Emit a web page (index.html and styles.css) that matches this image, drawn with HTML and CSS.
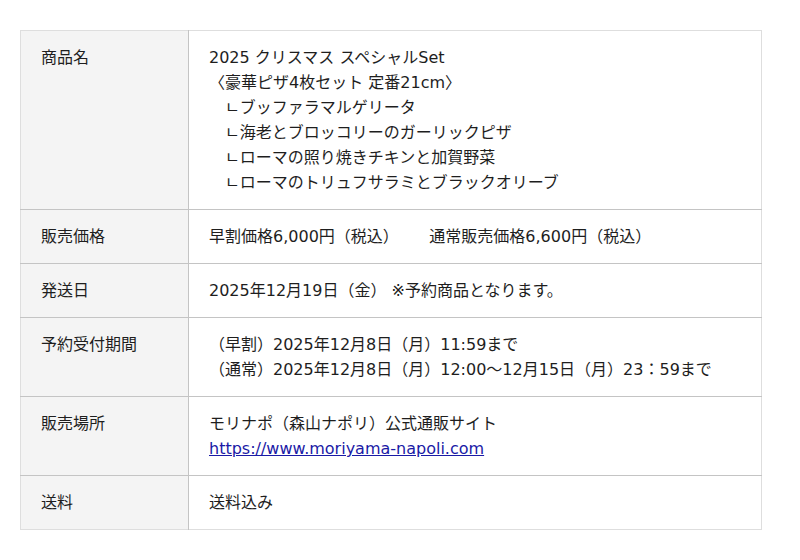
FILE: index.html
```html
<!DOCTYPE html>
<html lang="ja">
<head>
<meta charset="utf-8">
<link rel="stylesheet" href="styles.css">
</head>
<body>
<table class="spec">
  <tr>
    <th>商品名</th>
    <td>2025 クリスマス スペシャルSet<br>〈豪華ピザ4枚セット 定番21cm〉<br>　ㄴブッファラマルゲリータ<br>　ㄴ海老とブロッコリーのガーリックピザ<br>　ㄴローマの照り焼きチキンと加賀野菜<br>　ㄴローマのトリュフサラミとブラックオリーブ</td>
  </tr>
  <tr>
    <th>販売価格</th>
    <td>早割価格6,000円（税込）&nbsp;&nbsp;&nbsp;&nbsp;&nbsp;&nbsp;通常販売価格6,600円（税込）</td>
  </tr>
  <tr>
    <th>発送日</th>
    <td>2025年12月19日（金） ※予約商品となります。</td>
  </tr>
  <tr>
    <th>予約受付期間</th>
    <td>（早割）2025年12月8日（月）11:59まで<br>（通常）2025年12月8日（月）12:00～12月15日（月）23：59まで</td>
  </tr>
  <tr>
    <th>販売場所</th>
    <td>モリナポ（森山ナポリ）公式通販サイト<br><a href="#">https://www.moriyama-napoli.com</a></td>
  </tr>
  <tr>
    <th>送料</th>
    <td>送料込み</td>
  </tr>
</table>
</body>
</html>
```

FILE: styles.css
```css
html, body {
  margin: 0;
  padding: 0;
  background: #ffffff;
}
body {
  padding: 30px 38px 0 20px;
  font-family: "DejaVu Sans", "Noto Sans CJK JP", sans-serif;
  font-size: 16px;
  line-height: 25px;
  color: #1e1e1e;
}
.spec {
  width: 742px;
  border-collapse: collapse;
  border: 1px solid #dedede;
}
.spec th,
.spec td {
  text-align: left;
  vertical-align: top;
  padding: 14px 20px 14px 20px;
  border-top: 1px solid #c4c4c4;
}
.spec tr:first-child th,
.spec tr:first-child td {
  border-top: 1px solid #dedede;
}
.spec th {
  width: 127px;
  font-weight: normal;
  background: #f4f4f4;
  border-right: 1px solid #c4c4c4;
}
.spec a {
  color: #1a1aa6;
}
```
